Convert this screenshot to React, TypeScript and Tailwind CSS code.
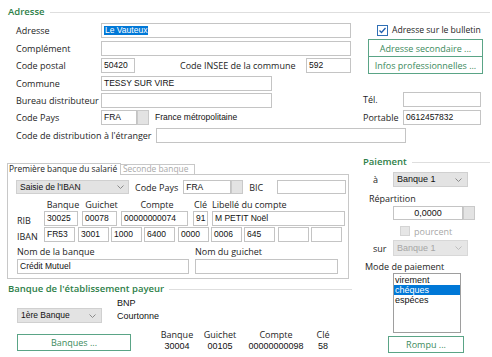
import React from "react";

const lb = "leading-none whitespace-nowrap";
const lbl = `${lb} text-[9px] text-[#1e1e1e]`;
const vf = "font-['Liberation_Sans',Arial,sans-serif] leading-none whitespace-nowrap";
const val = `${vf} text-[8.5px] text-[#111]`;
const val9 = `${vf} text-[9px] text-[#111]`;
const box = "shrink-0 border border-[#c4c4c4] bg-white flex items-center px-[2px]";
const inp = `h-[15px] ${box} ${val}`;
const head = "text-[9.5px] font-semibold leading-none whitespace-nowrap text-[#2d8048]";
const btn = "flex items-center justify-center border border-[#5aa486] bg-white text-[9px] text-[#3c8a5c] leading-none whitespace-nowrap";
const combo = "flex items-center justify-between border pl-[3px]";

function Chevron({ color = "#8a8a8a" }: { color?: string }) {
  return (
    <svg width="7" height="4" viewBox="0 0 7 4" fill="none">
      <polyline points="0.5,0.5 3.5,3.5 6.5,0.5" stroke={color} strokeWidth="1" />
    </svg>
  );
}

function Row({ label, children, lw = "w-[85px]" }: { label: string; children?: React.ReactNode; lw?: string }) {
  return (
    <div className="flex h-[15px] items-center">
      <span className={`${lbl} ${lw} shrink-0`}>{label}</span>
      {children}
    </div>
  );
}

export default function App() {
  return (
    <div className="relative h-[357px] w-[492px] overflow-hidden bg-white font-['Open_Sans',sans-serif] text-[#1e1e1e]">
      {/* Adresse */}
      <div className="h-[145px]">
        <div className="flex h-[19px] items-center pl-[8px] pr-[2px] pt-[5px]">
          <span className={head}>Adresse</span>
          <div className="ml-[5px] h-px flex-1 bg-[#dedede]" />
        </div>
        <div className="flex">
          <div className="w-[360px] shrink-0 pl-[16px]">
            <div className="mt-[4px]">
              <Row label="Adresse">
                <div className={`${inp} w-[250px]`}>
                  <span className="bg-[#0078d7] px-px text-white">Le Vauteux</span>
                </div>
              </Row>
            </div>
            <div className="mt-[3px]">
              <Row label="Complément">
                <div className={`${inp} w-[250px]`} />
              </Row>
            </div>
            <div className="mt-[2px]">
              <Row label="Code postal">
                <div className={`${inp} w-[34px]`}>50420</div>
                <span className={`${lbl} ml-[45px]`}>Code INSEE de la commune</span>
                <div className={`${inp} ml-auto mr-[9px] w-[45px]`}>592</div>
              </Row>
            </div>
            <div className="mt-[3px]">
              <Row label="Commune">
                <div className={`${inp} w-[171px]`}>TESSY SUR VIRE</div>
              </Row>
            </div>
            <div className="mt-[2px]">
              <Row label="Bureau distributeur">
                <div className={`${inp} w-[171px]`} />
              </Row>
            </div>
            <div className="mt-[2px]">
              <Row label="Code Pays">
                <div className={`${inp} w-[36px]`}>FRA</div>
                <div className="h-[15px] w-[12px] shrink-0 border border-[#c9c9c9] bg-[#e3e3e3]" />
                <span className={`${val} ml-[6px]`}>France métropolitaine</span>
              </Row>
            </div>
            <div className="mt-[3px]">
              <Row label="Code de distribution à l'étranger" lw="w-[140px]">
                <div className={`${inp} w-[250px]`} />
              </Row>
            </div>
          </div>
          <div className="flex-1">
            <div className="mt-[6px] flex items-center pl-[17px]">
              <svg width="11" height="11" viewBox="0 0 11 11">
                <rect x="0.5" y="0.5" width="10" height="10" fill="#fff" stroke="#2f6fb5" />
                <polyline points="2.5,5.5 4.5,7.5 8.5,3" fill="none" stroke="#1f5fae" strokeWidth="1.3" />
              </svg>
              <span className={`${lb} ml-[4px] text-[8.6px] text-[#1e1e1e]`}>Adresse sur le bulletin</span>
            </div>
            <div className="ml-[8px] mt-[3px] w-[115px]">
              <div className={`${btn} h-[18px]`}>Adresse secondaire ...</div>
              <div className={`${btn} h-[17px] border-t-0`}>Infos professionnelles ...</div>
            </div>
            <div className="mt-[18px] flex h-[15px] items-center pl-[3px]">
              <span className={`${lbl} w-[40px]`}>Tél.</span>
              <div className={`${inp} w-[78px]`} />
            </div>
            <div className="mt-[3px] flex h-[15px] items-center pl-[3px]">
              <span className={`${lbl} w-[40px]`}>Portable</span>
              <div className={`${inp} w-[78px]`}>0612457832</div>
            </div>
          </div>
        </div>
      </div>

      <div className="flex">
        {/* Left: banques */}
        <div className="w-[352px] shrink-0">
          <div className="ml-[7px] mt-[18px] flex h-[11px] items-end">
            <div className={`${lb} relative z-10 -mb-px flex h-[12px] w-[114px] items-center border border-b-0 border-[#c8c8c8] bg-white pl-px text-[8.4px] text-[#1e1e1e]`}>
              Première banque du salarié
            </div>
            <div className={`${lb} flex h-[10px] w-[74px] items-center border border-b-0 border-l-0 border-[#c8c8c8] pl-[2px] text-[8.4px] text-[#a8a8a8]`}>
              Seconde banque
            </div>
          </div>
          <div className="ml-[7px] h-[105px] w-[342px] border border-[#c8c8c8] pl-[8px] pt-[5px]">
            <div className="flex h-[14px] items-center">
              <div className={`${val} ${combo} h-[14px] w-[113px] border-[#d0d0d0] bg-[#e3e3e3] pr-[4px]`}>
                <span>Saisie de l'IBAN</span>
                <Chevron />
              </div>
              <span className={`${lbl} ml-[6px]`}>Code Pays</span>
              <div className={`${box} ${val} ml-[5px] h-[14px] w-[48px]`}>FRA</div>
              <div className="h-[14px] w-[12px] border border-[#c9c9c9] bg-[#e3e3e3]" />
              <span className={`${lbl} ml-[6px]`}>BIC</span>
              <div className={`${box} ml-[14px] h-[14px] w-[69px]`} />
            </div>
            <div className="mt-[5px] flex h-[10px] items-center pl-[28px]">
              <span className={`${lbl} w-[38px] text-center`}>Banque</span>
              <span className={`${lbl} w-[39px] text-center`}>Guichet</span>
              <span className={`${lbl} w-[72px] text-center`}>Compte</span>
              <span className={`${lbl} w-[15px] text-center`}>Clé</span>
              <span className={`${lbl} ml-[4px]`}>Libellé du compte</span>
            </div>
            <div className="mt-[2px] flex h-[15px] items-center">
              <span className={`${lbl} w-[28px] pl-px pt-[3px]`}>RIB</span>
              <div className={`${inp} w-[34px]`}>30025</div>
              <div className={`${inp} ml-[4px] w-[35px]`}>00078</div>
              <div className={`${inp} ml-[4px] w-[67px]`}>00000000074</div>
              <div className={`${inp} ml-[5px] w-[15px]`}>91</div>
              <div className={`${inp} ml-[4px] w-[133px]`}>M PETIT Noël</div>
            </div>
            <div className="mt-px flex h-[15px] items-center">
              <span className={`${lbl} w-[28px] pl-px pt-[3px]`}>IBAN</span>
              <div className={`${inp} w-[31px]`}>FR53</div>
              <div className={`${inp} ml-[3px] w-[31px]`}>3001</div>
              <div className={`${inp} ml-[2px] w-[31px]`}>1000</div>
              <div className={`${inp} ml-[2px] w-[31px]`}>6400</div>
              <div className={`${inp} ml-[3px] w-[31px]`}>0000</div>
              <div className={`${inp} ml-[2px] w-[31px]`}>0006</div>
              <div className={`${inp} ml-[2px] w-[31px]`}>645</div>
              <div className={`${inp} ml-[3px] w-[31px]`} />
              <div className={`${inp} ml-[2px] w-[31px]`} />
            </div>
            <div className="mt-[4px] flex h-[10px] items-center pl-px">
              <span className={`${lbl} w-[178px]`}>Nom de la banque</span>
              <span className={lbl}>Nom du guichet</span>
            </div>
            <div className="mt-[3px] flex h-[15px] items-center pl-px">
              <div className={`${inp} w-[172px]`}>Crédit Mutuel</div>
              <div className={`${inp} ml-[6px] w-[143px]`} />
            </div>
          </div>

          {/* Banque de l'établissement payeur */}
          <div className="mt-[4px] flex h-[12px] items-center pl-[8px]">
            <span className={head}>Banque de l'établissement payeur</span>
            <div className="ml-[5px] h-px flex-1 bg-[#dedede]" />
          </div>
          <div className="mt-[4px] flex items-start pl-[17px]">
            <div className={`${val} ${combo} mt-[9px] h-[15px] w-[85px] border-[#d0d0d0] bg-[#e3e3e3] pr-[5px]`}>
              <span>1ère Banque</span>
              <Chevron />
            </div>
            <div className="ml-[15px] flex flex-col gap-[4px]">
              <span className={val9}>BNP</span>
              <span className={val9}>Courtonne</span>
            </div>
          </div>
          <div className="mt-[7px] flex items-start pl-[17px]">
            <div className={`${btn} mt-[4px] h-[17px] w-[114px]`}>Banques ...</div>
            <div className="ml-[29px] flex">
              {[
                ["Banque", "30004", "w-[34px]"],
                ["Guichet", "00105", "w-[40px] ml-[6px]"],
                ["Compte", "00000000098", "w-[56px] ml-[8px]"],
                ["Clé", "58", "w-[20px] ml-[9px]"],
              ].map(([h, v, w]) => (
                <div key={h} className={`flex flex-col items-center gap-[3px] ${w}`}>
                  <span className={lbl}>{h}</span>
                  <span className={val9}>{v}</span>
                </div>
              ))}
            </div>
          </div>
        </div>

        {/* Right: Paiement */}
        <div className="flex-1">
          <div className="mt-[11px] flex h-[12px] items-center pl-[11px] pr-[2px]">
            <span className={head}>Paiement</span>
            <div className="ml-[5px] h-px flex-1 bg-[#dedede]" />
          </div>
          <div className="mt-[4px] flex h-[15px] items-center pl-[21px]">
            <span className={`${lbl} w-[20px]`}>à</span>
            <div className={`${val9} ${combo} h-[15px] w-[75px] border-[#d0d0d0] bg-[#e3e3e3] pr-[5px]`}>
              <span>Banque 1</span>
              <Chevron />
            </div>
          </div>
          <div className={`${lbl} mt-[7px] pl-[17px]`}>Répartition</div>
          <div className="mt-[3px] flex h-[14px] items-center pl-[41px]">
            <div className={`${box} ${val9} h-[14px] w-[70px] justify-center`}>0,0000</div>
            <div className="h-[14px] w-[12px] border border-[#c9c9c9] bg-[#e3e3e3]" />
          </div>
          <div className="mt-[6px] flex h-[10px] items-center pl-[48px]">
            <div className="h-[10px] w-[10px] border border-[#d4d4d4] bg-[#e6e6e6]" />
            <span className={`${lb} ml-[4px] text-[9px] text-[#a8a8a8]`}>pourcent</span>
          </div>
          <div className="mt-[4px] flex h-[16px] items-center pl-[21px]">
            <span className={`${lbl} w-[20px]`}>sur</span>
            <div className={`${vf} ${combo} h-[16px] w-[75px] border-[#d8d8d8] bg-[#e6e6e6] pr-[5px] text-[9px] text-[#a5a5a5]`}>
              <span>Banque 1</span>
              <Chevron color="#bdbdbd" />
            </div>
          </div>
          <div className={`${lbl} mt-[6px] pl-[13px]`}>Mode de paiement</div>
          <div className={`${val9} ml-[41px] mt-[2px] h-[60px] w-[68px] border border-[#9e9e9e] pt-[1px]`}>
            <div className="flex h-[10px] items-center px-px">virement</div>
            <div className="flex h-[10px] items-center bg-[#0078d7] px-px text-white">chéques</div>
            <div className="flex h-[10px] items-center px-px">espéces</div>
          </div>
          <div className={`${btn} ml-[36px] mt-[3px] h-[17px] w-[76px]`}>Rompu ...</div>
        </div>
      </div>
    </div>
  );
}
